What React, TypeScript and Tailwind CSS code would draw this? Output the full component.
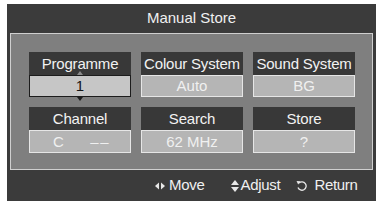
import React from 'react';

const font = { fontFamily: '"Liberation Sans", Arial, sans-serif' };

const Label: React.FC<{ text: string }> = ({ text }) => (
  <div className="h-[23px] bg-[#383838] text-[#f2f2f2] text-[15px] leading-[23px] text-center tracking-[-0.2px]">{text}</div>
);

const Value: React.FC<{ children: React.ReactNode; selected?: boolean }> = ({ children, selected }) => {
  if (selected) {
    return (
      <div className="relative h-[22px] bg-[#c6c6c6] border-[1.5px] border-[#1c1c1c] text-[#141414] text-[15px] leading-[19px] text-center">
        {children}
        <span className="absolute left-1/2 -translate-x-1/2 -top-[5px] w-0 h-0 border-l-[3px] border-r-[3px] border-b-[4px] border-l-transparent border-r-transparent border-b-[#8a8a8a]" />
        <span className="absolute left-1/2 -translate-x-1/2 -bottom-[5px] w-0 h-0 border-l-[3px] border-r-[3px] border-t-[4px] border-l-transparent border-r-transparent border-t-[#1c1c1c]" />
      </div>
    );
  }
  return (
    <div className="h-[22px] bg-[#b5b5b5] border border-[#e6e6e6] text-[#f0f0f0] text-[15px] leading-[20px] text-center">
      {children}
    </div>
  );
};

export default function App() {
  return (
    <div className="w-[376px] h-[201px] bg-white pl-[7px] pt-[4px] overflow-hidden" style={font}>
      <div className="w-full h-full bg-[#3b3b3b] flex flex-col">
        <div className="h-[28px] flex items-center justify-center text-[#f0f0f0] text-[15px]">Manual Store</div>

        <div className="ml-[3px] mr-[3px] mt-[1px] h-[137px] bg-[#7f7f7f] border border-[#cfcfcf] pl-[18px] pr-[16px] pt-[18px]">
          <div className="grid grid-cols-[102px_102px_102px] gap-x-[10px] gap-y-[10px]">
            <div>
              <Label text="Programme" />
              <Value selected>1</Value>
            </div>
            <div>
              <Label text="Colour System" />
              <Value>Auto</Value>
            </div>
            <div>
              <Label text="Sound System" />
              <Value>BG</Value>
            </div>
            <div>
              <Label text="Channel" />
              <div className="h-[23px] bg-[#b5b5b5] border border-[#e6e6e6] text-[#f0f0f0] text-[15px] leading-[21px] flex justify-between pl-[23px] pr-[20px]">
                <span>C</span>
                <span className="tracking-[1.5px]">––</span>
              </div>
            </div>
            <div>
              <Label text="Search" />
              <div className="h-[23px] bg-[#b5b5b5] border border-[#e6e6e6] text-[#f0f0f0] text-[15px] leading-[21px] text-center">62 MHz</div>
            </div>
            <div>
              <Label text="Store" />
              <div className="h-[23px] bg-[#b5b5b5] border border-[#e6e6e6] text-[#f0f0f0] text-[15px] leading-[21px] text-center">?</div>
            </div>
          </div>
        </div>

        <div className="flex-1 flex items-center pl-[148px] text-[#f0f0f0] text-[15px] tracking-[-0.3px]">
          <svg width="10" height="8" viewBox="0 0 10 8" className="mr-[4px]">
            <path d="M0 4 L4 0.5 L4 7.5 Z" fill="#e8e8e8" />
            <path d="M10 4 L6 0.5 L6 7.5 Z" fill="#e8e8e8" />
          </svg>
          <span>Move</span>
          <svg width="8" height="12" viewBox="0 0 8 12" className="ml-[27px] mr-[1px]">
            <path d="M4 0 L8 5 L0 5 Z" fill="#e8e8e8" />
            <path d="M4 12 L8 7 L0 7 Z" fill="#e8e8e8" />
          </svg>
          <span>Adjust</span>
          <svg width="11" height="11" viewBox="0 0 11 11" className="ml-[16px] mr-[7px]">
            <path d="M3 3 A4.2 4.2 0 1 1 2 7.5" fill="none" stroke="#e8e8e8" strokeWidth="1.3" />
            <path d="M0.5 1 L4.5 1.2 L2.2 4.6 Z" fill="#e8e8e8" />
          </svg>
          <span>Return</span>
        </div>
      </div>
    </div>
  );
}
